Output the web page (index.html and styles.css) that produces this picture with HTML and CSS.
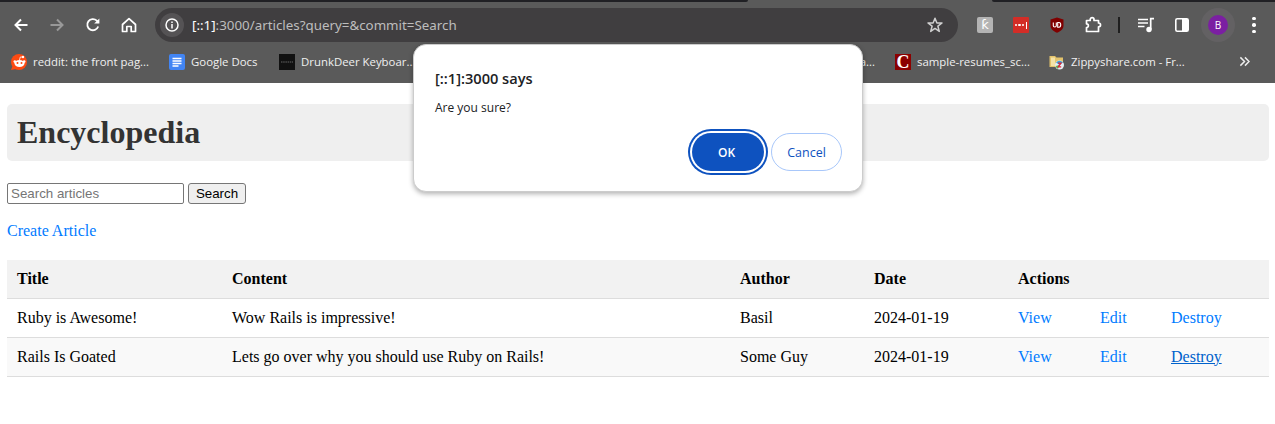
FILE: index.html
```html
<!DOCTYPE html>
<html lang="en">
<head>
  <meta charset="UTF-8">
  <title>Encyclopedia</title>
  <link rel="stylesheet" href="styles.css">
</head>
<body>
  <header class="browser">
    <div class="tabstrip">
      <div class="strip-dark strip-left"></div>
      <div class="strip-tab"></div>
      <div class="strip-dark strip-right"></div>
    </div>
    <div class="toolbar">
      <span class="tool"><svg width="16" height="16" viewBox="0 0 16 16"><path d="M14.5 8H2.5M8 2.5L2.5 8L8 13.5" fill="none" stroke="#fff" stroke-width="2"/></svg></span>
      <span class="tool"><svg width="16" height="16" viewBox="0 0 16 16"><path d="M1.5 8H13.5M8 2.5L13.5 8L8 13.5" fill="none" stroke="#999" stroke-width="2"/></svg></span>
      <span class="tool"><svg width="16" height="16" viewBox="0 0 16 16"><path d="M13.2 9.5A5.6 5.6 0 1 1 11.8 3.6L13.6 5.6" fill="none" stroke="#fff" stroke-width="1.8"/><path d="M14.4 1.4V6.6H9.2" fill="#fff"/></svg></span>
      <span class="tool"><svg width="16" height="16" viewBox="0 0 16 16"><path d="M1.5 7.5L8 1.6L14.5 7.5V14.5H10.2V9.5H5.8V14.5H1.5Z" fill="none" stroke="#fff" stroke-width="1.7" stroke-linejoin="round"/></svg></span>

      <div class="omnibox">
        <span class="site-chip"><svg width="14" height="14" viewBox="0 0 14 14"><circle cx="7" cy="7" r="6" fill="none" stroke="#fff" stroke-width="1.5"/><path d="M7 6V10.5M7 3.4V4.9" stroke="#fff" stroke-width="1.5"/></svg></span>
        <span class="url"><span class="url-host">[::1]</span>:3000/articles?query=&amp;commit=Search</span>
        <svg class="star" width="18" height="18" viewBox="0 0 18 18"><path d="M9 2.2L10.9 7H16L11.9 10.2L13.3 15.4L9 12.4L4.7 15.4L6.1 10.2L2 7H7.1Z" fill="none" stroke="#cfcfcf" stroke-width="1.5" stroke-linejoin="round"/></svg>
      </div>

      <span class="tool ext-first"><span class="ext-k">ƙ</span></span>
      <span class="tool"><span class="ext-lastpass"><i></i><i></i><i></i><b></b></span></span>
      <span class="tool"><svg width="16" height="16" viewBox="0 0 16 16"><path d="M8 .5L14.5 2.5V8.5C14.5 12 11.5 14.3 8 15.7C4.5 14.3 1.5 12 1.5 8.5V2.5Z" fill="#800000"/><path d="M4.3 5.5V8.8C4.3 10.4 7.3 10.4 7.3 8.8V5.5" fill="none" stroke="#fff" stroke-width="1.1"/><path d="M8.7 5.5V10.2H10C12.3 10.2 12.3 5.5 10 5.5Z" fill="none" stroke="#fff" stroke-width="1.1"/></svg></span>
      <span class="tool"><svg width="18" height="18" viewBox="0 0 18 18"><path d="M2.5 4.5H6.2V3.5C6.2 .9 10 .9 10 3.5V4.5H14.5V7C17.2 7 17.2 10.8 14.5 10.8V15.5H2.5V11.6C5 11.6 5 7.8 2.5 7.8Z" fill="none" stroke="#fff" stroke-width="1.7" stroke-linejoin="round"/></svg></span>
      <span class="tool-sep"></span>
      <span class="tool"><svg width="16" height="16" viewBox="0 0 16 16"><path d="M0 2.5H10M0 6H10M0 9.5H6.5" stroke="#fff" stroke-width="1.6"/><circle cx="11" cy="12.5" r="2.7" fill="#fff"/><path d="M12.7 12.5V1.7H16" fill="none" stroke="#fff" stroke-width="1.7"/></svg></span>
      <span class="tool"><svg width="16" height="16" viewBox="0 0 16 16"><rect x="1.8" y="1.8" width="12.4" height="12.4" rx="1.5" fill="none" stroke="#fff" stroke-width="1.6"/><rect x="8" y="2" width="6" height="12" fill="#fff"/></svg></span>
      <span class="tool"><span class="avatar-ring"><span class="avatar">B</span></span></span>
      <span class="tool"><span class="kebab"><i></i><i></i><i></i></span></span>
    </div>

    <nav class="bookmarks">
      <span class="bookmark bm-reddit"><svg width="16" height="16" viewBox="0 0 16 16"><circle cx="8" cy="8" r="8" fill="#fc4a12"/><path d="M0 16L2 11L5 15Z" fill="#fc4a12"/><ellipse cx="8.5" cy="9.5" rx="5" ry="3.5" fill="#fff"/><circle cx="3.8" cy="7.6" r="1.3" fill="#fff"/><circle cx="13.2" cy="7.6" r="1.3" fill="#fff"/><circle cx="12" cy="3" r="1.2" fill="#fff"/><path d="M8.5 6L9.3 3L12 3" fill="none" stroke="#fff" stroke-width=".8"/><circle cx="6.5" cy="9" r="1" fill="#fc4a12"/><circle cx="10.5" cy="9" r="1" fill="#fc4a12"/></svg>reddit: the front pag...</span>
      <span class="bookmark bm-docs"><svg width="16" height="16" viewBox="0 0 16 16"><rect width="16" height="16" rx="2" fill="#4285f4"/><path d="M3.5 4.5H12.5M3.5 7H12.5M3.5 9.5H12.5M3.5 12H9.5" stroke="#fff" stroke-width="1.4"/></svg>Google Docs</span>
      <span class="bookmark bm-deer"><svg width="16" height="16" viewBox="0 0 16 16"><rect width="16" height="16" fill="#111"/><path d="M2 8H14" stroke="#666" stroke-width="1.2" stroke-dasharray="1.5 .7"/></svg>DrunkDeer Keyboar...</span>
      <span class="bookmark bm-hidden">a...</span>
      <span class="bookmark bm-resumes"><span class="favicon-c">C</span>sample-resumes_sc...</span>
      <span class="bookmark bm-zippy"><svg width="16" height="16" viewBox="0 0 16 16"><path d="M.5 2H6L7.5 3.5H14V13H.5Z" fill="#e3c36c"/><path d="M2 3.5H6V12H2Z" fill="#f4e3a8"/><circle cx="10.5" cy="11" r="4.5" fill="#e8eef2"/><path d="M7 8.5A4.5 4.5 0 0 1 14 8.5L10.5 11Z" fill="#3fa0d8"/><path d="M6.5 12A4.5 4.5 0 0 0 9 15L10.5 11Z" fill="#5cb85c"/><path d="M9 9.2H12L9.2 12.8H12.2" fill="none" stroke="#d23" stroke-width="1.2"/></svg>Zippyshare.com - Fr...</span>
      <svg class="bm-more" width="11" height="11" viewBox="0 0 12 12"><path d="M1.5 1.5L6 6L1.5 10.5M6.5 1.5L11 6L6.5 10.5" fill="none" stroke="#eee" stroke-width="1.6"/></svg>
    </nav>
  </header>

  <div class="dialog">
    <p class="dialog-title">[::1]:3000 says</p>
    <p class="dialog-text">Are you sure?</p>
    <div class="dialog-actions">
      <button class="btn-ok">OK</button>
      <button class="btn-cancel">Cancel</button>
    </div>
  </div>

  <main class="page">
    <h1 class="page-title">Encyclopedia</h1>

    <form class="search-form">
      <input type="text" class="search-input" placeholder="Search articles">
      <button type="button" class="search-btn">Search</button>
    </form>

    <p class="create-line"><a href="#" class="link">Create Article</a></p>

    <table class="articles">
      <colgroup>
        <col class="col-title"><col class="col-content"><col class="col-author"><col class="col-date">
        <col class="col-view"><col class="col-edit"><col class="col-destroy">
      </colgroup>
      <thead>
        <tr>
          <th>Title</th>
          <th>Content</th>
          <th>Author</th>
          <th>Date</th>
          <th colspan="3">Actions</th>
        </tr>
      </thead>
      <tbody>
        <tr>
          <td>Ruby is Awesome!</td>
          <td>Wow Rails is impressive!</td>
          <td>Basil</td>
          <td>2024-01-19</td>
          <td><a href="#" class="link">View</a></td>
          <td><a href="#" class="link">Edit</a></td>
          <td><a href="#" class="link">Destroy</a></td>
        </tr>
        <tr class="row-alt">
          <td>Rails Is Goated</td>
          <td>Lets go over why you should use Ruby on Rails!</td>
          <td>Some Guy</td>
          <td>2024-01-19</td>
          <td><a href="#" class="link">View</a></td>
          <td><a href="#" class="link">Edit</a></td>
          <td><a href="#" class="link link-hover">Destroy</a></td>
        </tr>
      </tbody>
    </table>
  </main>
</body>
</html>
```

FILE: styles.css
```css
html, body {
  margin: 0;
  height: 424px;
  overflow: hidden;
}

body {
  font-family: "Liberation Serif", serif;
  background: #fff;
  color: #000;
  position: relative;
}

/* browser chrome */
.browser {
  background: #5a5a5a;
  height: 83px;
  font-family: "Open Sans", sans-serif;
  color: #fff;
}

.tabstrip {
  display: flex;
  height: 2px;
}

.strip-dark {
  background: #202024;
}

.strip-left {
  width: 748px;
  border-bottom-right-radius: 2px;
}

.strip-tab {
  width: 244px;
}

.strip-right {
  flex: 1;
  border-bottom-left-radius: 2px;
}

.toolbar {
  display: flex;
  align-items: center;
  height: 36px;
  margin-top: 5px;
  padding-left: 3px;
}

.tool {
  width: 36px;
  height: 36px;
  flex: none;
  display: flex;
  align-items: center;
  justify-content: center;
}

.omnibox {
  flex: none;
  box-sizing: border-box;
  width: 803px;
  height: 34px;
  margin-left: 8px;
  padding: 0 14px 0 5px;
  display: flex;
  align-items: center;
  background: #403e40;
  border-radius: 17px;
}

.site-chip {
  width: 24px;
  height: 24px;
  display: flex;
  align-items: center;
  justify-content: center;
  border-radius: 50%;
  background: #555355;
}

.url {
  flex: 1;
  margin-left: 8px;
  font-family: "Noto Sans", sans-serif;
  font-size: 13.35px;
  color: #bdbdbd;
}

.url-host {
  color: #fff;
}

.ext-first {
  margin-left: 9px;
}

.ext-k {
  width: 16px;
  height: 16px;
  display: block;
  background: #b4b4b4;
  border-radius: 2px;
  color: #fff;
  font-family: "DejaVu Sans", sans-serif;
  font-size: 13px;
  line-height: 16px;
  text-align: center;
}

.ext-lastpass {
  width: 16px;
  height: 16px;
  display: flex;
  align-items: center;
  justify-content: center;
  gap: 1px;
  background: #d32d27;
  border-radius: 1px;
}

.ext-lastpass i {
  width: 2.5px;
  height: 2.5px;
  background: #fff;
  border-radius: 50%;
}

.ext-lastpass b {
  width: 1px;
  height: 7px;
  margin-left: 1px;
  background: #fff;
}

.tool-sep {
  flex: none;
  width: 2px;
  height: 16px;
  margin: 0 8px 0 7px;
  background: #1f1f1f;
}

.avatar-ring {
  width: 34px;
  height: 34px;
  display: flex;
  align-items: center;
  justify-content: center;
  border-radius: 50%;
  background: #636163;
}

.avatar {
  width: 20px;
  height: 20px;
  border-radius: 50%;
  background: #7b1fa2;
  font-size: 10px;
  line-height: 20px;
  text-align: center;
}

.kebab {
  display: flex;
  flex-direction: column;
  gap: 3px;
}

.kebab i {
  width: 3.5px;
  height: 3.5px;
  background: #fff;
  border-radius: 50%;
}

.bookmarks {
  display: flex;
  align-items: center;
  height: 37px;
  padding-left: 11px;
  font-size: 11.4px;
  color: #f0f0f0;
}

.bookmark {
  flex: none;
  display: flex;
  align-items: center;
  gap: 6px;
  white-space: nowrap;
}

.bm-reddit { width: 158px; }
.bm-docs { width: 110px; }
.bm-deer { width: 150px; }
.bm-hidden { width: 446px; justify-content: flex-end; }
.bm-resumes { width: 154px; margin-left: 20px; }
.bm-zippy { width: 190px; }

.favicon-c {
  width: 16px;
  height: 16px;
  background: #8b0000;
  color: #fff;
  font-family: "Liberation Serif", serif;
  font-size: 18px;
  font-weight: bold;
  line-height: 16px;
  text-align: center;
}

.bm-more {
  flex: none;
}

/* confirm dialog */
.dialog {
  position: absolute;
  left: 413px;
  top: 44px;
  box-sizing: border-box;
  width: 450px;
  height: 148px;
  padding: 23px 20px 20px 21px;
  background: #fff;
  border: 1px solid #ccc;
  border-radius: 13px;
  box-shadow: 0 2px 5px rgba(0, 0, 0, 0.3);
  font-family: "Open Sans", sans-serif;
  color: #202124;
}

.dialog-title {
  margin: 0;
  font-size: 14.6px;
  font-weight: 600;
  line-height: 20px;
}

.dialog-text {
  margin: 11px 0 0;
  font-size: 12px;
  line-height: 18px;
}

.dialog-actions {
  display: flex;
  justify-content: flex-end;
  align-items: center;
  gap: 5px;
  margin-top: 16px;
}

.btn-ok {
  box-sizing: border-box;
  width: 72px;
  height: 38px;
  padding: 0 3px 0 0;
  background: #0e52bf;
  color: #fff;
  border: none;
  border-radius: 19px;
  box-shadow: 0 0 0 2px #fff, 0 0 0 4px #0e52bf;
  font: 600 12px "Open Sans", sans-serif;
}

.btn-cancel {
  box-sizing: border-box;
  width: 71px;
  height: 38px;
  margin-left: 2px;
  background: #fff;
  color: #0e52bf;
  border: 1px solid #a8c7fa;
  border-radius: 19px;
  font: 500 12.5px "Open Sans", sans-serif;
}

/* page */
.page {
  padding: 21px 6px 0 7px;
}

.page-title {
  margin: 0;
  height: 57px;
  padding-left: 10px;
  background: #efefef;
  border-radius: 5px;
  color: #333;
  font-size: 32px;
  line-height: 57px;
}

.search-form {
  display: flex;
  align-items: center;
  gap: 4px;
  margin-top: 22px;
}

.search-input {
  box-sizing: border-box;
  width: 177px;
  height: 21px;
  padding: 1px 3px;
  border: 1px solid #767676;
  border-radius: 2px;
  font: 13.33px "Liberation Sans", sans-serif;
}

.search-btn {
  box-sizing: border-box;
  width: 58px;
  height: 21px;
  padding: 0;
  background: #efefef;
  border: 1px solid #767676;
  border-radius: 3px;
  color: #000;
  font: 13.33px "Liberation Sans", sans-serif;
}

.create-line {
  margin: 17px 0 0;
  font-size: 16px;
  line-height: 20px;
}

.link {
  color: #007bff;
  text-decoration: none;
}

.link-hover {
  color: #0062cc;
  text-decoration: underline;
}

.articles {
  width: 1262px;
  margin-top: 19px;
  table-layout: fixed;
  border-collapse: collapse;
  font-size: 16px;
}

.col-title { width: 215px; }
.col-content { width: 508px; }
.col-author { width: 134px; }
.col-date { width: 144px; }
.col-view { width: 82px; }
.col-edit { width: 71px; }
.col-destroy { width: 108px; }

.articles th,
.articles td {
  box-sizing: border-box;
  padding: 0 10px;
  text-align: left;
  border-bottom: 1px solid #ddd;
}

.articles td {
  height: 39px;
}

.articles th {
  height: 38px;
  padding-top: 1px;
  background: #f2f2f2;
}

.row-alt td {
  background: #f9f9f9;
}
```
